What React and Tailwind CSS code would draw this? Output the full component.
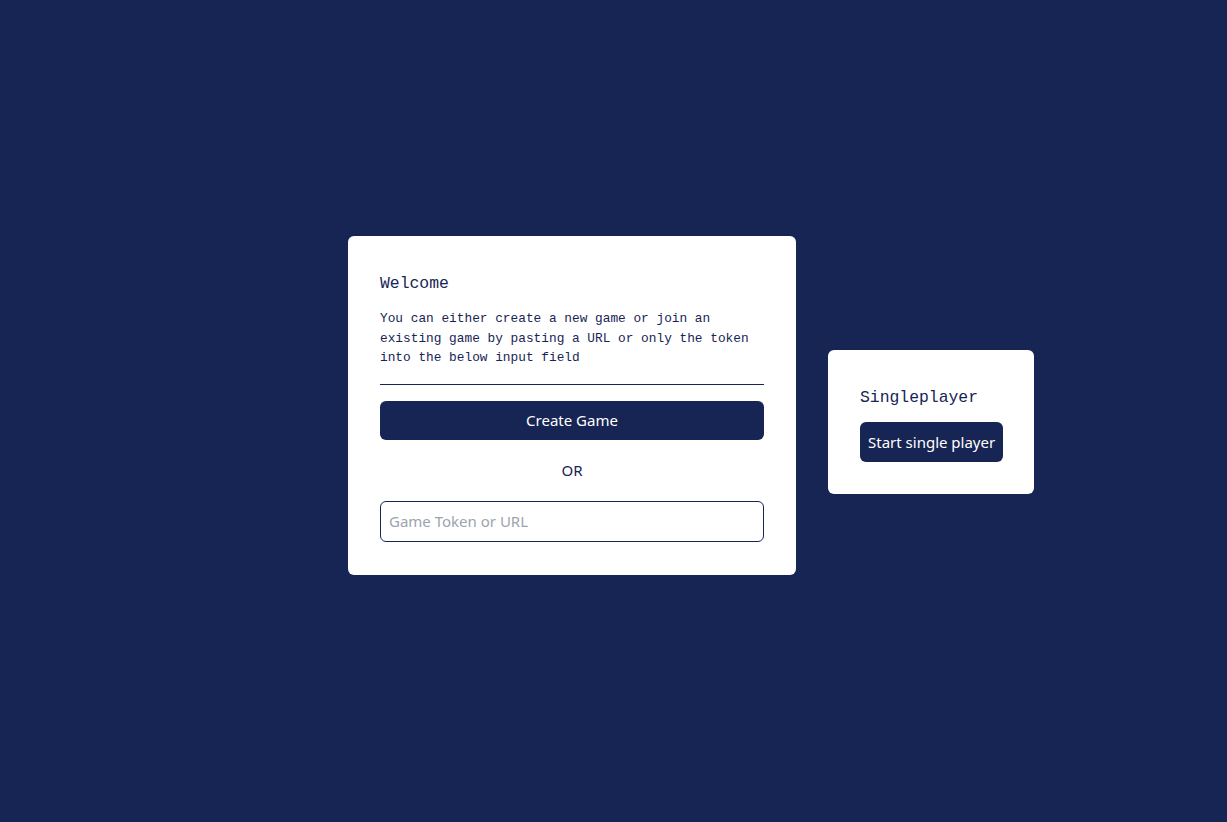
import { useState } from 'react';

const mono = { fontFamily: '"Liberation Mono", "DejaVu Sans Mono", monospace' };

export default function App() {
  const [token, setToken] = useState('');

  return (
    <div
      className="min-h-screen w-full bg-[#172554] text-[#172554]"
      style={{ fontFamily: '"Noto Sans", "Open Sans", sans-serif' }}
    >
      <div className="flex items-start gap-8 pl-[348px] pt-[236px]">
        {/* Multiplayer card */}
        <div className="w-[448px] rounded-md bg-white p-8 pb-[33px]">
          <h2 className="mt-[2px] text-[16.4px] leading-[28px]" style={mono}>
            Welcome
          </h2>
          <p className="mt-[11px] text-[12.8px] leading-[19.5px]" style={mono}>
            You can either create a new game or join an existing game by pasting a URL or only the
            token into the below input field
          </p>
          <hr className="mt-4 border-t border-[#172554]" />
          <button className="mt-4 h-[39px] w-full rounded-md bg-[#172554] text-[15px] text-white">
            Create Game
          </button>
          <div className="flex h-[61px] items-center justify-center text-[15px]">OR</div>
          <input
            value={token}
            onChange={(e) => setToken(e.target.value)}
            placeholder="Game Token or URL"
            className="h-[41px] w-full rounded-md border border-[#172554] px-2 text-[15px] outline-none placeholder:text-[#9ca3af]"
          />
        </div>

        {/* Singleplayer card */}
        <div className="mt-[114px] w-[206px] rounded-md bg-white p-8">
          <h2 className="mt-[2px] text-[16.4px] leading-[28px]" style={mono}>
            Singleplayer
          </h2>
          <button className="mt-[10px] h-10 whitespace-nowrap rounded-md bg-[#172554] px-2 text-[15px] text-white">
            Start single player
          </button>
        </div>
      </div>
    </div>
  );
}
